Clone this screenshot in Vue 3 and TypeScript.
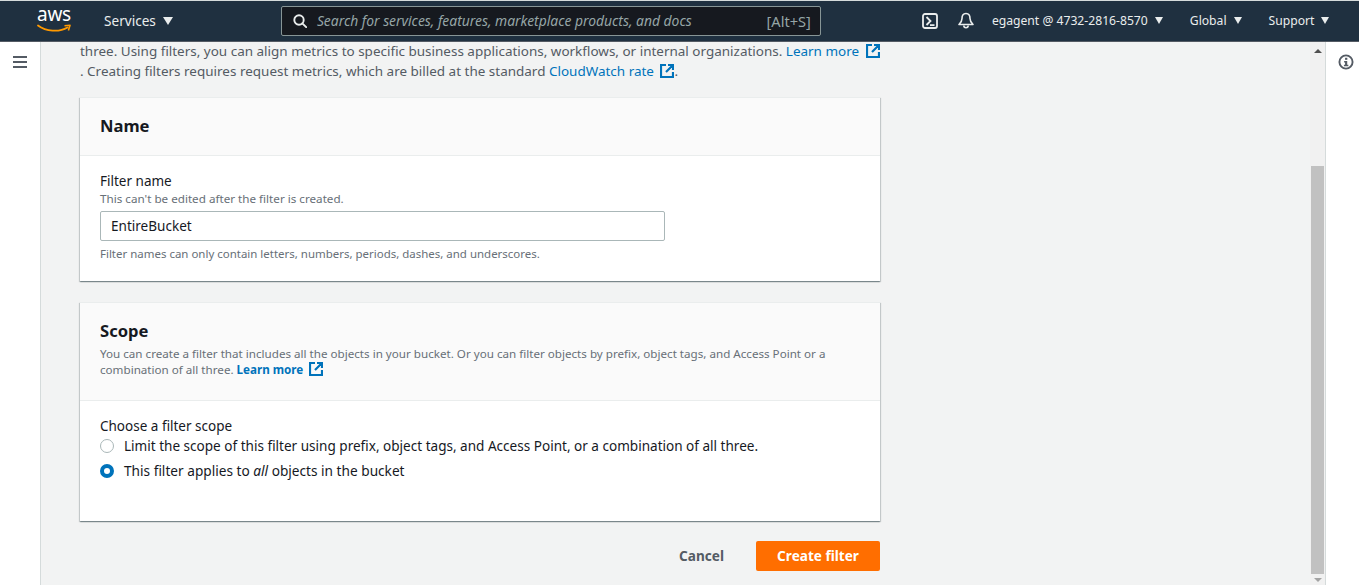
<script setup lang="ts">
const navRight = [
  { label: 'egagent @ 4732-2816-8570', cls: 'acct' },
  { label: 'Global', cls: 'glob' },
  { label: 'Support', cls: 'supp' },
]
</script>

<template>
  <div class="page">
    <header class="top">
      <div class="logo">
        <span class="aws">aws</span>
        <svg class="smile" width="34" height="10" viewBox="0 0 34 10">
          <path d="M1 1.5C9 7.5 22 8.5 30.5 3.5" fill="none" stroke="#f90" stroke-width="1.8" stroke-linecap="round" />
          <path d="M27.5 1.8L33 1.2L31.4 6.4" fill="none" stroke="#f90" stroke-width="1.6" stroke-linejoin="round" />
        </svg>
      </div>
      <div class="nav-item services">Services <i class="caret big"></i></div>
      <div class="search">
        <svg class="mag" width="14" height="14" viewBox="0 0 14 14" fill="none" stroke="#eaeded" stroke-width="1.9">
          <circle cx="6" cy="6" r="4.7" />
          <path d="M9.3 9.3L13.2 13.2" stroke-linecap="round" />
        </svg>
        <span class="ph">Search for services, features, marketplace products, and docs</span>
        <span class="kbd">[Alt+S]</span>
      </div>
      <svg class="cli" width="16" height="16" viewBox="0 0 16 16" fill="none" stroke="#eaeded" stroke-width="1.8">
        <rect x="1" y="1" width="14" height="14" rx="2" />
        <path d="M4.5 4L8.5 8L4.5 12M8 12.2H12.5" />
      </svg>
      <svg class="bell" width="16" height="17" viewBox="0 0 16 17" fill="none" stroke="#eaeded" stroke-width="1.6">
        <path d="M8 1.5C5 1.5 4 4 4 6.5C4 9.5 2.8 10.8 1 12.5H15C13.2 10.8 12 9.5 12 6.5C12 4 11 1.5 8 1.5Z" stroke-linejoin="round" />
        <path d="M5.8 13.5a2.2 2.2 0 0 0 4.4 0" />
      </svg>
      <div v-for="n in navRight" :key="n.cls" class="nav-item small" :class="n.cls">
        {{ n.label }} <i class="caret"></i>
      </div>
    </header>
    <div class="below">
      <aside class="side">
        <span class="burger"><i></i><i></i><i></i></span>
      </aside>
      <main class="main">
        <div class="column">
          <p class="intro">
            three. Using filters, you can align metrics to specific business applications, workflows, or internal organizations.
            <a>Learn more <svg class="ext" width="14" height="14" viewBox="0 0 14 14" fill="none" stroke="#0073bb" stroke-width="2.2"><path d="M6 1H1V13H13V8M8 1H13V6M13 1L6 8" /></svg></a>
            <br />. Creating filters requires request metrics, which are billed at the standard
            <a>CloudWatch rate <svg class="ext" width="14" height="14" viewBox="0 0 14 14" fill="none" stroke="#0073bb" stroke-width="2.2"><path d="M6 1H1V13H13V8M8 1H13V6M13 1L6 8" /></svg></a>.
          </p>
          <section class="card name-card">
            <div class="card-head name-head"><h2>Name</h2></div>
            <div class="card-body name-body">
              <div class="label lab-name">Filter name</div>
              <div class="hint first">This can't be edited after the filter is created.</div>
              <div class="input">EntireBucket</div>
              <div class="hint after">Filter names can only contain letters, numbers, periods, dashes, and underscores.</div>
            </div>
          </section>
          <section class="card scope-card">
            <div class="card-head scope-head">
              <h2>Scope</h2>
              <div class="hint desc">
                <div>You can create a filter that includes all the objects in your bucket. Or you can filter objects by prefix, object tags, and Access Point or a</div>
                <div class="desc-line"><span>combination of all three.</span> <a class="bold">Learn more <svg class="ext" width="14" height="14" viewBox="0 0 14 14" fill="none" stroke="#0073bb" stroke-width="2.2"><path d="M6 1H1V13H13V8M8 1H13V6M13 1L6 8" /></svg></a></div>
              </div>
            </div>
            <div class="card-body scope-body">
              <div class="label">Choose a filter scope</div>
              <div class="radio-row"><span class="radio"></span>Limit the scope of this filter using prefix, object tags, and Access Point, or a combination of all three.</div>
              <div class="radio-row second"><span class="radio on"></span><span>This filter applies to <em>all</em> objects in the bucket</span></div>
            </div>
          </section>
          <div class="actions">
            <button class="cancel">Cancel</button>
            <button class="primary">Create filter</button>
          </div>
        </div>
      </main>
      <div class="scrollbar">
        <i class="arrow up"></i>
        <div class="thumb"></div>
        <i class="arrow down"></i>
      </div>
      <aside class="tools">
        <svg width="16" height="16" viewBox="0 0 17 17">
          <circle cx="8.5" cy="8.5" r="7" fill="none" stroke="#545b64" stroke-width="2" />
          <rect x="7.5" y="4" width="2.4" height="2.2" fill="#545b64" />
          <path d="M6.5 7.5H9.8V11.5H11V13H6.3V11.5H7.5V9H6.5Z" fill="#545b64" />
        </svg>
      </aside>
    </div>
  </div>
</template>

<style>
html, body { margin: 0; padding: 0; overflow: hidden; background: #f2f3f3; }
</style>

<style scoped>
.page {
  width: 1359px;
  height: 585px;
  display: flex;
  flex-direction: column;
  overflow: hidden;
  font-family: "Noto Sans", "Open Sans", sans-serif;
  font-size: 13.5px;
  color: #16191f;
}
.top {
  height: 42px;
  flex: none;
  box-sizing: border-box;
  border-top: 1px solid #d5dbdb;
  border-bottom: 1px solid #545b64;
  padding-bottom: 1px;
  background: #1f3040;
  display: flex;
  align-items: center;
  color: #eaeded;
}
.logo { width: 34px; margin-left: 37px; display: flex; flex-direction: column; align-items: center; height: 30px; }
.aws { font-size: 19px; line-height: 19px; color: #fff; margin-top: -1px; letter-spacing: -0.3px; }
.smile { margin-top: 0; flex: none; }
.nav-item { white-space: nowrap; display: flex; align-items: center; gap: 7px; }
.services { margin-left: 33px; font-size: 13.6px; gap: 6px; }
.caret { display: inline-block; width: 0; height: 0; border-left: 4.5px solid transparent; border-right: 4.5px solid transparent; border-top: 7px solid #eaeded; }
.caret.big { border-left-width: 5.5px; border-right-width: 5.5px; border-top-width: 8px; margin-left: 1px; }
.search {
  margin-left: 108px;
  width: 540px;
  height: 30px;
  box-sizing: border-box;
  background: #16191f;
  border: 1px solid #879596;
  border-radius: 2px;
  display: flex;
  align-items: center;
  padding: 0 9px 0 11px;
}
.mag { flex: none; }
.ph { margin-left: 10px; font-style: italic; color: #95a5a6; font-size: 13.86px; white-space: nowrap; flex: 1; }
.kbd { color: #95a5a6; font-size: 14.6px; }
.cli { margin-left: 101px; flex: none; }
.bell { margin-left: 20px; flex: none; }
.small { font-size: 12.16px; }
.acct { margin-left: 18px; }
.glob { margin-left: 27px; }
.supp { margin-left: 27px; }
.below { flex: 1; display: flex; min-height: 0; }
.side { width: 40px; flex: none; background: #fff; border-right: 1px solid #d5dbdb; display: flex; justify-content: center; padding-top: 14px; }
.burger { display: flex; flex-direction: column; gap: 3px; width: 14px; margin-left: -1px; }
.burger i { display: block; height: 2px; background: #545b64; }
.main { flex: 1; min-width: 0; background: #f2f3f3; padding-left: 39px; overflow: hidden; }
.column { width: 800px; }
.intro { margin: -1px 0 16px; font-size: 13.48px; line-height: 20px; color: #545b64; white-space: nowrap; }
.intro a, .desc a { color: #0073bb; }
.ext { vertical-align: -2px; margin-left: 3px; }
.card { background: #fff; box-shadow: 0 1px 1px 0 rgba(0, 28, 36, 0.3), 1px 1px 1px 0 rgba(0, 28, 36, 0.15), -1px 1px 1px 0 rgba(0, 28, 36, 0.15); }
.name-card { margin-bottom: 21px; border-top: 1px solid #eaeded; }
.card-head { background: #fafafa; border-bottom: 1px solid #eaeded; padding: 0 20px; box-sizing: border-box; }
h2 { margin: 0; font-size: 16.6px; font-weight: 700; color: #16191f; line-height: 22px; }
.name-head { height: 58px; padding-top: 17px; }
.card-body { padding: 0 20px; }
.name-body { height: 125px; box-sizing: border-box; padding-top: 16px; }
.label { font-size: 13.5px; line-height: 18px; color: #16191f; }
.lab-name { margin-bottom: 1px; }
.hint { font-size: 11.48px; line-height: 16px; color: #687078; }
.hint.first { font-size: 11.67px; }
.input { width: 565px; height: 30px; box-sizing: border-box; border: 1px solid #aab7b8; background: #fff; border-radius: 2px; margin-top: 4px; padding: 0 10px; line-height: 28px; font-size: 13.55px; color: #16191f; }
.after { margin-top: 5px; }
.scope-head { height: 99px; padding-top: 17px; border-top: 1px solid #eaeded; }
.desc { margin: 4px 0 0; line-height: 16px; font-size: 11.64px; white-space: nowrap; }
.bold { font-weight: 700; }
.scope-body { height: 120px; box-sizing: border-box; padding-top: 16px; }
.radio-row { display: flex; align-items: center; height: 25px; line-height: 20px; font-size: 13.55px; white-space: nowrap; color: #16191f; margin-top: -2px; }
.second { margin-top: 0; font-size: 13.66px; }
.radio { width: 14px; height: 14px; box-sizing: border-box; border: 1.5px solid #aab7b8; border-radius: 50%; background: #fff; margin-right: 10px; flex: none; }
.radio.on { border: 4px solid #0073bb; }
.actions { display: flex; justify-content: flex-end; align-items: center; margin-top: 20px; }
button { font-family: inherit; font-weight: 700; font-size: 13.6px; border: none; cursor: pointer; }
.cancel { background: none; color: #545b64; margin-right: 32px; padding: 0 0 2px; }
.primary { width: 124px; height: 30px; background: #ff6e00; color: #fff; border-radius: 2px; padding: 0 0 2px; }
.scrollbar { width: 15px; flex: none; background: #f1f1f1; display: flex; flex-direction: column; align-items: center; border-right: 1px solid #d5dbdb; }
.arrow { display: block; width: 0; height: 0; border-left: 4px solid transparent; border-right: 4px solid transparent; flex: none; }
.up { border-bottom: 4px solid #505050; margin-top: 7px; }
.thumb { width: 13px; margin-top: 113px; height: 408px; flex: none; background: #c1c1c1; margin-left: -1px; }
.down { border-top: 4px solid #a3a3a3; margin-top: 4px; }
.tools { width: 33px; flex: none; background: #fff; display: flex; justify-content: center; padding-top: 12px; box-sizing: border-box; }
.tools svg { margin-left: 6px; }
</style>
